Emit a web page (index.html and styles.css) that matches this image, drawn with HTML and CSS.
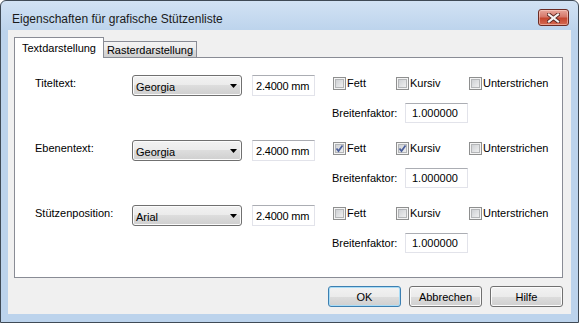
FILE: index.html
```html
<!DOCTYPE html>
<html lang="de">
<head>
  <meta charset="UTF-8">
  <title>Eigenschaften für grafische Stützenliste</title>
  <link rel="stylesheet" href="styles.css">
</head>
<body>
  <div class="window">
    <div class="titlebar">
      <span class="title">Eigenschaften für grafische Stützenliste</span>
      <span class="close">
        <svg width="13" height="10" viewBox="0 0 13 10">
          <path d="M2 1.5L11 8.5M11 1.5L2 8.5" stroke="#5a2620" stroke-width="4" stroke-linecap="square"/>
          <path d="M2 1.5L11 8.5M11 1.5L2 8.5" stroke="#f4f4f4" stroke-width="2.2" stroke-linecap="square"/>
        </svg>
      </span>
    </div>
    <div class="client">
      <div class="tabs">
        <div class="tab active">Textdarstellung</div>
        <div class="tab">Rasterdarstellung</div>
      </div>
      <div class="panel">
        <div class="row">
          <div class="row-label">Titeltext:</div>
          <div class="combo"><span>Georgia</span><svg width="7" height="4"><path d="M0 0h7L3.5 4z"/></svg></div>
          <input class="field size" type="text" value="2.4000 mm">
          <div class="opts">
            <div class="checks">
              <label class="check fett"><span class="box"></span>Fett</label>
              <label class="check kursiv"><span class="box"></span>Kursiv</label>
              <label class="check"><span class="box"></span>Unterstrichen</label>
            </div>
            <div class="factor"><span class="factor-label">Breitenfaktor:</span><input class="field factor-input" type="text" value="1.000000"></div>
          </div>
        </div>
        <div class="row">
          <div class="row-label">Ebenentext:</div>
          <div class="combo"><span>Georgia</span><svg width="7" height="4"><path d="M0 0h7L3.5 4z"/></svg></div>
          <input class="field size" type="text" value="2.4000 mm">
          <div class="opts">
            <div class="checks">
              <label class="check fett"><span class="box"><svg width="11" height="11"><path d="M2.5 5.5L4.5 8L8.5 2.5" fill="none" stroke="#4a5e9a" stroke-width="1.7"/></svg></span>Fett</label>
              <label class="check kursiv"><span class="box"><svg width="11" height="11"><path d="M2.5 5.5L4.5 8L8.5 2.5" fill="none" stroke="#4a5e9a" stroke-width="1.7"/></svg></span>Kursiv</label>
              <label class="check"><span class="box"></span>Unterstrichen</label>
            </div>
            <div class="factor"><span class="factor-label">Breitenfaktor:</span><input class="field factor-input" type="text" value="1.000000"></div>
          </div>
        </div>
        <div class="row">
          <div class="row-label">Stützenposition:</div>
          <div class="combo"><span>Arial</span><svg width="7" height="4"><path d="M0 0h7L3.5 4z"/></svg></div>
          <input class="field size" type="text" value="2.4000 mm">
          <div class="opts">
            <div class="checks">
              <label class="check fett"><span class="box"></span>Fett</label>
              <label class="check kursiv"><span class="box"></span>Kursiv</label>
              <label class="check"><span class="box"></span>Unterstrichen</label>
            </div>
            <div class="factor"><span class="factor-label">Breitenfaktor:</span><input class="field factor-input" type="text" value="1.000000"></div>
          </div>
        </div>
      </div>
      <div class="buttons">
        <button class="btn default">OK</button>
        <button class="btn">Abbrechen</button>
        <button class="btn">Hilfe</button>
      </div>
    </div>
  </div>
</body>
</html>
```
FILE: styles.css
```css
body {
  margin: 0;
  font-family: "Liberation Sans", Arial, sans-serif;
  font-size: 11px;
  color: #000;
}
.window {
  width: 579px;
  height: 323px;
  box-sizing: border-box;
  border: 1px solid #3f4a56;
  border-radius: 6px 6px 0 0;
  background: linear-gradient(#d2e2f4, #bcd3ec 30px);
  display: flex;
  flex-direction: column;
}
.titlebar {
  height: 29px;
  flex: none;
  display: flex;
  align-items: flex-start;
  padding: 8px 9px 0 11px;
  box-sizing: border-box;
}
.title {
  flex: 1;
  font-size: 12px;
  line-height: 14px;
  margin-top: 3px;
  color: #1a1a1a;
}
.close {
  width: 31px;
  height: 17px;
  box-sizing: border-box;
  border: 1px solid #6b2b24;
  border-radius: 3px;
  background: linear-gradient(#e8a69b, #d6786a 45%, #c5462f 55%, #d46a52);
  box-shadow: inset 0 0 0 1px rgba(255, 220, 210, 0.5);
  display: flex;
  align-items: center;
  justify-content: center;
}
.client {
  flex: 1;
  margin: 0 7px 8px;
  background: #f0f0f0;
  padding: 7px 8px 0 6px;
}
.tabs {
  display: flex;
  align-items: flex-end;
  height: 21px;
  margin-bottom: -1px;
}
.tab {
  position: relative;
  box-sizing: border-box;
  width: 93px;
  height: 17px;
  border: 1px solid #898c95;
  border-left: none;
  background: linear-gradient(#f3f3f3, #ebebeb 50%, #dddddd 50%, #cfcfcf);
  text-align: center;
  line-height: 14px;
  padding-top: 1px;
}
.tab.active {
  width: 90px;
  height: 21px;
  border-left: 1px solid #898c95;
  border-bottom: none;
  background: #fff;
  padding-top: 3px;
  z-index: 1;
}
.panel {
  box-sizing: border-box;
  height: 221px;
  background: #fff;
  border: 1px solid #898c95;
  padding: 17px 0 0 20px;
}
.row {
  display: flex;
  align-items: flex-start;
  height: 65px;
}
.row-label {
  width: 97px;
  line-height: 14px;
  padding-top: 1px;
}
.combo {
  width: 110px;
  height: 21px;
  box-sizing: border-box;
  margin-right: 10px;
  padding: 0 4px 0 3px;
  display: flex;
  align-items: center;
  justify-content: space-between;
  border: 1px solid #707070;
  border-radius: 3px;
  background: linear-gradient(#f2f2f2, #ebebeb 50%, #dddddd 50%, #cfcfcf);
  box-shadow: inset 0 0 0 1px #fbfbfb;
}
.combo span {
  padding-top: 2px;
}
.field {
  box-sizing: border-box;
  border: 1px solid #e2e3ea;
  border-top-color: #abadb3;
  padding: 0 4px;
  font: inherit;
  color: #000;
  background: #fff;
  outline: none;
}
.size {
  width: 63px;
  height: 21px;
  margin-right: 18px;
  padding: 0 0 0 3px;
  letter-spacing: -0.2px;
}
.opts {
  padding-top: 2px;
}
.checks {
  display: flex;
  height: 13px;
}
.check {
  display: flex;
  align-items: center;
  gap: 1px;
  line-height: 13px;
}
.check.fett {
  width: 63px;
}
.check.kursiv {
  width: 73px;
}
.box {
  width: 13px;
  height: 13px;
  box-sizing: border-box;
  border: 1px solid #8e8f8f;
  background: linear-gradient(135deg, #c6c9cd, #f7f7f7);
  box-shadow: inset 0 0 0 1px #f4f4f4, inset 0 0 0 2px #b4b6b8;
  display: flex;
}
.factor {
  display: flex;
  align-items: center;
  margin-top: 13px;
  margin-left: -1px;
}
.factor-label {
  width: 73px;
}
.factor-input {
  width: 63px;
  height: 20px;
  padding: 0 6px;
}
.buttons {
  display: flex;
  justify-content: flex-end;
  gap: 8px;
  margin-top: 8px;
}
.btn {
  width: 73px;
  height: 21px;
  box-sizing: border-box;
  font: inherit;
  color: #000;
  border: 1px solid #707070;
  border-radius: 3px;
  background: linear-gradient(#f2f2f2, #ebebeb 50%, #dddddd 50%, #cfcfcf);
  box-shadow: inset 0 0 0 1px #fbfbfb;
  padding: 0;
}
.btn.default {
  border-color: #3c7fb1;
  box-shadow: inset 0 0 0 1px #a9dcf6;
}
```
